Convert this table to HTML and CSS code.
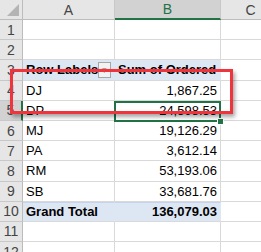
FILE: index.html
```html
<!DOCTYPE html>
<html lang="en">
<head>
    <meta charset="UTF-8">
    <title>Pivot Table</title>
    <link rel="stylesheet" href="styles.css">
</head>
<body>
    <div class="sheet">
        <div class="grid">
            <div class="corner"><span class="tri"></span></div>
            <div class="colhead">A</div>
            <div class="colhead active">B</div>
            <div class="colhead">C</div>

            <div class="rowhead">1</div><div class="cell"></div><div class="cell"></div><div class="cell"></div>
            <div class="rowhead">2</div><div class="cell"></div><div class="cell"></div><div class="cell"></div>

            <div class="rowhead">3</div>
            <div class="cell pivot bold">Row Labels <span class="drop">&#9662;</span></div>
            <div class="cell pivot bold">Sum of Ordered</div>
            <div class="cell"></div>

            <div class="rowhead">4</div><div class="cell">DJ</div><div class="cell num">1,867.25</div><div class="cell"></div>
            <div class="rowhead active">5</div><div class="cell">DP</div><div class="cell num">24,598.53</div><div class="cell"></div>
            <div class="rowhead">6</div><div class="cell">MJ</div><div class="cell num">19,126.29</div><div class="cell"></div>
            <div class="rowhead">7</div><div class="cell">PA</div><div class="cell num">3,612.14</div><div class="cell"></div>
            <div class="rowhead">8</div><div class="cell">RM</div><div class="cell num">53,193.06</div><div class="cell"></div>
            <div class="rowhead">9</div><div class="cell">SB</div><div class="cell num">33,681.76</div><div class="cell"></div>

            <div class="rowhead">10</div>
            <div class="cell pivot total bold">Grand Total</div>
            <div class="cell pivot total bold num">136,079.03</div>
            <div class="cell"></div>

            <div class="rowhead">11</div><div class="cell"></div><div class="cell"></div><div class="cell"></div>
            <div class="rowhead">12</div><div class="cell"></div><div class="cell"></div><div class="cell"></div>
        </div>

        <div class="selection"><span class="handle"></span></div>
        <div class="callout"></div>
    </div>
</body>
</html>
```

FILE: styles.css
```css
body {
    margin: 0;
    background: #ffffff;
    font-family: "Liberation Sans", Arial, sans-serif;
    overflow: hidden;
}
.sheet {
    position: relative;
    width: 261px;
    height: 252px;
    overflow: hidden;
}
.grid {
    display: grid;
    grid-template-columns: 23px 92px 106px 60px;
    grid-template-rows: 20px repeat(12, 20.2px);
}
.corner {
    background: #e6e6e6;
    border-right: 1px solid #bcbcbc;
    border-bottom: 1px solid #bcbcbc;
    position: relative;
}
.tri {
    position: absolute;
    right: 3px;
    bottom: 3px;
    width: 0;
    height: 0;
    border-left: 12px solid transparent;
    border-bottom: 12px solid #b4b4b4;
}
.colhead {
    background: #e6e6e6;
    border-right: 1px solid #c8c8c8;
    border-bottom: 1px solid #bcbcbc;
    color: #444444;
    font-size: 14px;
    display: flex;
    align-items: center;
    justify-content: center;
}
.colhead.active {
    background: #d2d2d2;
    color: #217346;
    border-bottom: 2px solid #217346;
}
.rowhead {
    background: #e6e6e6;
    border-right: 1px solid #bcbcbc;
    border-bottom: 1px solid #c8c8c8;
    color: #444444;
    font-size: 14px;
    display: flex;
    align-items: center;
    justify-content: center;
}
.rowhead.active {
    background: #d2d2d2;
    border-right: 2px solid #217346;
}
.cell {
    border-right: 1px solid #d9d9d9;
    border-bottom: 1px solid #d9d9d9;
    font-size: 13px;
    color: #000000;
    display: flex;
    align-items: center;
    padding: 0 3px;
    white-space: nowrap;
    overflow: hidden;
}
.num {
    justify-content: flex-end;
}
.bold {
    font-weight: bold;
}
.pivot {
    background: #dde6f3;
    border-right-color: #dde6f3;
}
.total {
    border-top: 1px solid #c5d4ec;
}
.drop {
    margin-left: auto;
    width: 16px;
    height: 16px;
    box-sizing: border-box;
    border: 1px solid #a6a6a6;
    background: #f2f2f2;
    color: #666666;
    font-size: 9px;
    font-weight: normal;
    display: flex;
    align-items: center;
    justify-content: center;
}
.selection {
    position: absolute;
    left: 114px;
    top: 101px;
    width: 107px;
    height: 21px;
    box-sizing: border-box;
    border: 2px solid #217346;
}
.handle {
    position: absolute;
    right: -5px;
    bottom: -5px;
    width: 5px;
    height: 5px;
    background: #217346;
    border: 1px solid #ffffff;
}
.callout {
    position: absolute;
    left: 10px;
    top: 69px;
    width: 223px;
    height: 45px;
    box-sizing: border-box;
    border: 3px solid #f0343c;
    box-shadow: 2px 3px 4px rgba(0, 0, 0, 0.35);
}
```
